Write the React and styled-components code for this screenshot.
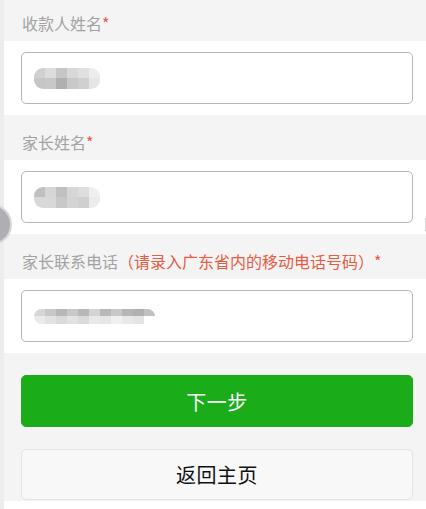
import React from 'react';
import styled, { createGlobalStyle } from 'styled-components';

const GlobalStyle = createGlobalStyle`
  html, body {
    margin: 0;
    padding: 0;
    background: #ffffff;
    overflow: hidden;
  }
  body {
    font-family: "Noto Sans CJK SC", "Noto Sans", "Liberation Sans", sans-serif;
  }
`;

const fields = [
  {
    key: 'payee',
    label: '收款人姓名',
    cols: 6,
    rowHeight: 10.5,
    cells: [
      '#d0d0d0', '#dcdcdc', '#c6c6c6', '#d8d8d8', '#e0e0e0', '#ececec',
      '#c6c6c6', '#c8c8c8', '#b0b0b0', '#c8c8c8', '#d0d0d0', '#e6e6e6',
    ],
  },
  {
    key: 'parent',
    label: '家长姓名',
    cols: 6,
    rowHeight: 10.5,
    cells: [
      '#c0c0c0', '#d6d6d6', '#c0c0c0', '#d6d6d6', '#dedede', '#f0f0f0',
      '#d8d8d8', '#d8d8d8', '#c8c8c8', '#d4d4d4', '#cfcfcf', '#ebebeb',
    ],
  },
  {
    key: 'phone',
    label: '家长联系电话',
    hint: '（请录入广东省内的移动电话号码）',
    cols: 11,
    rowHeight: 7.5,
    cells: [
      '#d6d6d6', '#c8c8c8', '#b8b8b8', '#c8c8c8', '#b8b8b8', '#d4d4d4', '#b8b8b8', '#c8c8c8', '#b6b6b6', '#b0b0b0', '#c0c0c0',
      '#eaeaea', '#e2e2e2', '#dadada', '#e2e2e2', '#dadada', '#e8e8e8', '#e6e6e6', '#f0f0f0', '#e8e8e8', '#e4e4e4', '#ffffff',
    ],
  },
];

const App = () => (
  <>
    <GlobalStyle />
    <Page>
      <Strip />
      <Main>
        <Form>
          {fields.map((f) => (
            <React.Fragment key={f.key}>
              <Title>
                {f.label}
                {f.hint && <Hint>{f.hint}</Hint>}
                <Star>*</Star>
              </Title>
              <Cell>
                <Input>
                  <Mosaic $cols={f.cols} $rowHeight={f.rowHeight}>
                    {f.cells.map((c, i) => (
                      <Pixel key={i} $c={c} />
                    ))}
                  </Mosaic>
                </Input>
              </Cell>
            </React.Fragment>
          ))}
          <Actions>
            <Button $primary>下一步</Button>
            <Button>返回主页</Button>
          </Actions>
        </Form>
      </Main>
      <FloatBall />
      <EdgeTab />
    </Page>
  </>
);

const Page = styled.div`
  position: relative;
  display: flex;
  width: 426px;
  height: 509px;
  overflow: hidden;
`;

const Strip = styled.div`
  flex: 0 0 4px;
  background: #ededed;
`;

const Main = styled.div`
  flex: 1;
  background: #ffffff;
`;

const Form = styled.div`
  display: flex;
  flex-direction: column;
  margin-top: -4px;
`;

const Title = styled.div`
  height: 45px;
  box-sizing: border-box;
  padding: 18px 13px 8px 18px;
  background: #f4f4f4;
  color: #a2a2a2;
  font-size: 16px;
  line-height: 19px;
  white-space: nowrap;
`;

const Hint = styled.span`
  color: #e85a43;
`;

const Star = styled.span`
  color: #e85a43;
`;

const Cell = styled.div`
  padding: 11px 13px 11px 17px;
  background: #ffffff;
`;

const Input = styled.div`
  display: flex;
  align-items: center;
  height: 52px;
  box-sizing: border-box;
  padding: 0 12px;
  border: 1px solid #b6b6b6;
  border-radius: 5px;
  background: #ffffff;
`;

const Mosaic = styled.div`
  display: grid;
  grid-template-columns: repeat(${(p) => p.$cols}, 11px);
  grid-auto-rows: ${(p) => p.$rowHeight}px;
  border-radius: 9px;
  overflow: hidden;
  filter: blur(0.6px);
`;

const Pixel = styled.div`
  background: ${(p) => p.$c};
`;

const Actions = styled.div`
  display: flex;
  flex-direction: column;
  gap: 22px;
  padding: 22px 13px 1px 17px;
  background: #f4f4f4;
`;

const Button = styled.div`
  display: flex;
  align-items: center;
  justify-content: center;
  height: ${(p) => (p.$primary ? '52px' : '51px')};
  box-sizing: border-box;
  border-radius: 5px;
  border: 1px solid ${(p) => (p.$primary ? '#1aad19' : '#e3e3e3')};
  background: ${(p) => (p.$primary ? '#1aad19' : '#f8f8f8')};
  color: ${(p) => (p.$primary ? '#ffffff' : '#111111')};
  font-size: 20px;
  letter-spacing: 0.5px;
`;

const FloatBall = styled.div`
  position: absolute;
  left: -29px;
  top: 204px;
  width: 41px;
  height: 41px;
  box-sizing: border-box;
  border-radius: 50%;
  background: #aeaeb3;
  border: 2px solid #d6d6d9;
`;

const EdgeTab = styled.div`
  position: absolute;
  right: 0;
  top: 218px;
  width: 1px;
  height: 13px;
  background: #d8d8d8;
`;

export default App;
